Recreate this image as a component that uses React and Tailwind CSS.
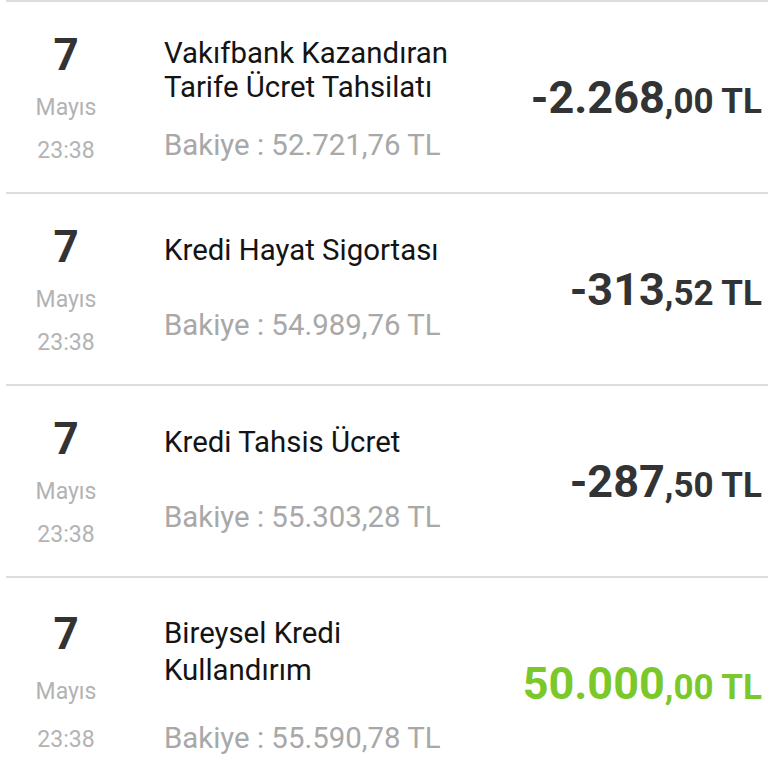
import React from "react";

const rows = [
  {
    title: ["Vakıfbank Kazandıran", "Tarife Ücret Tahsilatı"],
    bakiye: "52.721,76 TL",
    big: "-2.268",
    small: ",00 TL",
    green: false,
    tall: false,
    twoLine: true,
  },
  {
    title: ["Kredi Hayat Sigortası"],
    bakiye: "54.989,76 TL",
    big: "-313",
    small: ",52 TL",
    green: false,
  },
  {
    title: ["Kredi Tahsis Ücret"],
    bakiye: "55.303,28 TL",
    big: "-287",
    small: ",50 TL",
    green: false,
  },
  {
    title: ["Bireysel Kredi", "Kullandırım"],
    bakiye: "55.590,78 TL",
    big: "50.000",
    small: ",00 TL",
    green: true,
    tall: true,
  },
];

function DateCol({ tall }) {
  return (
    <div className={`w-[120px] shrink-0 flex flex-col items-center ${tall ? "pt-[34px]" : "pt-[31px]"}`}>
      <div className="text-[44px] leading-[44px] font-bold text-[#333333]">7</div>
      <div className={`text-[23px] leading-[23px] text-[#b3b3b3] ${tall ? "mt-[24px]" : "mt-[19px]"}`}>Mayıs</div>
      <div className={`text-[23px] leading-[23px] text-[#b3b3b3] ${tall ? "mt-[25px]" : "mt-[20px]"}`}>23:38</div>
    </div>
  );
}

function Row({ r }) {
  let titlePt = "pt-[39px]";
  let gap = "mt-[41px]";
  let lead = "leading-[34px]";
  if (r.twoLine) {
    titlePt = "pt-[34px]";
    gap = "mt-[24px]";
  }
  if (r.tall) {
    titlePt = "pt-[37px]";
    gap = "mt-[32px]";
    lead = "leading-[37px]";
  }
  return (
    <div className={`flex border-t-2 border-[#dddddd] ${r.tall ? "h-[212px]" : "h-[192px]"}`}>
      <DateCol tall={r.tall} />
      <div className={`ml-[38px] flex-1 flex flex-col ${titlePt}`}>
        <div className={`text-[29.4px] ${lead} text-[#141414]`}>
          {r.title.map((t, i) => (
            <div key={i}>{t}</div>
          ))}
        </div>
        <div className={`text-[29.4px] leading-[34px] text-[#a8a8a8] ${gap}`}>Bakiye : {r.bakiye}</div>
      </div>
      <div className="flex items-center pr-[6px] shrink-0">
        <div className={`font-bold whitespace-nowrap ${r.green ? "text-[#7bc82a]" : "text-[#333333]"}`}>
          <span className="text-[45px] leading-none">{r.big}</span>
          <span className="text-[35px] leading-none">{r.small}</span>
        </div>
      </div>
    </div>
  );
}

export default function App() {
  return (
    <div
      className="w-[768px] h-[768px] overflow-hidden bg-white pl-[6px]"
      style={{ fontFamily: "Roboto, 'Noto Sans', sans-serif" }}
    >
      {rows.map((r, i) => (
        <Row key={i} r={r} />
      ))}
    </div>
  );
}
